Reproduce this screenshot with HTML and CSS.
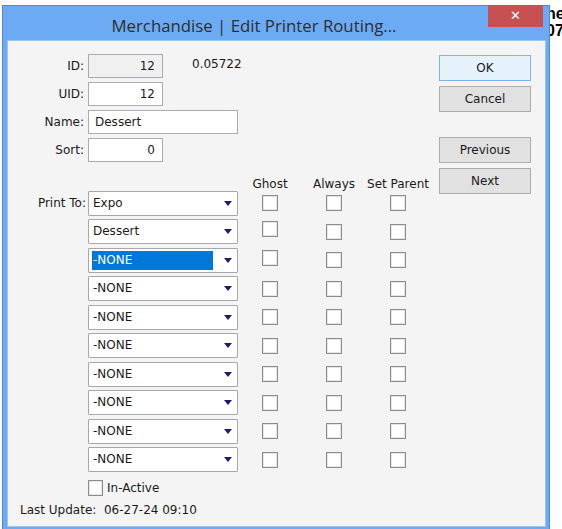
FILE: index.html
```html
<!DOCTYPE html>
<html>
<head>
<meta charset="utf-8">
<link rel="stylesheet" href="styles.css">
</head>
<body>
<div class="desk-text">ne<br>07</div>
<div class="window">
  <div class="titlebar">
    <div class="title">Merchandise | Edit Printer Routing...</div>
    <div class="close">&#x2715;</div>
  </div>
  <div class="client">
    <div class="main">
      <div class="form">
        <div class="lbl">ID:</div>
        <div class="input short num disabled">12</div>
        <div class="extra">0.05722</div>
        <div class="lbl">UID:</div>
        <div class="input short num">12</div>
        <div></div>
        <div class="lbl">Name:</div>
        <div class="input long">Dessert</div>
        <div class="lbl">Sort:</div>
        <div class="input short num">0</div>
        <div></div>
      </div>
      <div class="routes">
        <div></div><div></div>
        <div class="hdr">Ghost</div><div class="hdr">Always</div><div class="hdr">Set Parent</div>

        <div class="lbl">Print To:</div>
        <div class="combo"><span class="val">Expo</span><span class="arrow"></span></div>
        <div class="cb"></div><div class="cb"></div><div class="cb"></div>

        <div></div>
        <div class="combo"><span class="val">Dessert</span><span class="arrow"></span></div>
        <div class="cb up"></div><div class="cb"></div><div class="cb"></div>

        <div></div>
        <div class="combo"><span class="val sel">-NONE</span><span class="arrow"></span></div>
        <div class="cb up"></div><div class="cb"></div><div class="cb"></div>

        <div></div>
        <div class="combo"><span class="val">-NONE</span><span class="arrow"></span></div>
        <div class="cb"></div><div class="cb"></div><div class="cb"></div>

        <div></div>
        <div class="combo"><span class="val">-NONE</span><span class="arrow"></span></div>
        <div class="cb"></div><div class="cb"></div><div class="cb"></div>

        <div></div>
        <div class="combo"><span class="val">-NONE</span><span class="arrow"></span></div>
        <div class="cb"></div><div class="cb"></div><div class="cb"></div>

        <div></div>
        <div class="combo"><span class="val">-NONE</span><span class="arrow"></span></div>
        <div class="cb"></div><div class="cb"></div><div class="cb"></div>

        <div></div>
        <div class="combo"><span class="val">-NONE</span><span class="arrow"></span></div>
        <div class="cb"></div><div class="cb"></div><div class="cb"></div>

        <div></div>
        <div class="combo"><span class="val">-NONE</span><span class="arrow"></span></div>
        <div class="cb"></div><div class="cb"></div><div class="cb"></div>

        <div></div>
        <div class="combo"><span class="val">-NONE</span><span class="arrow"></span></div>
        <div class="cb"></div><div class="cb"></div><div class="cb"></div>
      </div>
      <div class="inactive"><span class="cb small"></span><span>In-Active</span></div>
      <div class="updated">Last Update:&nbsp; 06-27-24 09:10</div>
    </div>
    <div class="buttons">
      <div class="btn default">OK</div>
      <div class="btn">Cancel</div>
      <div class="btn gap">Previous</div>
      <div class="btn">Next</div>
    </div>
  </div>
</div>
</body>
</html>
```

FILE: styles.css
```css
html, body {
  margin: 0;
  padding: 0;
  background: #ffffff;
  overflow: hidden;
  height: 529px;
}
body {
  position: relative;
  font-family: "DejaVu Sans", sans-serif;
  font-size: 12px;
  color: #1a1a1a;
}
.desk-text {
  position: absolute;
  left: 546px;
  top: 5px;
  font-family: "Liberation Sans", sans-serif;
  font-weight: bold;
  font-size: 16px;
  line-height: 17px;
  color: #000;
}
.window {
  position: relative;
  margin: 5px 0 0 2px;
  width: 548px;
  box-sizing: border-box;
  border: 1px solid #4d8ad6;
  background: #6caaf3;
  padding: 0 3px 3px 4px;
}
.titlebar {
  position: relative;
  height: 34px;
}
.title {
  padding: 10px 45px 0 0;
  text-align: center;
  font-family: "Open Sans", sans-serif;
  font-size: 16.8px;
  line-height: 20px;
  color: #2e2e2e;
}
.close {
  position: absolute;
  right: 3px;
  top: -1px;
  width: 55px;
  height: 22px;
  background: #c75050;
  color: #ffffff;
  font-family: "DejaVu Sans", sans-serif;
  font-size: 13px;
  font-weight: bold;
  line-height: 22px;
  text-align: center;
}
.client {
  display: flex;
  background: #f4f4f4;
  height: 487px;
  border: 1px solid #9cc4f2;
  box-sizing: border-box;
}
.main {
  display: flex;
  flex-direction: column;
}
.form {
  margin-top: 13px;
  display: grid;
  grid-template-columns: 80px 75px auto;
  grid-auto-rows: 24px;
  row-gap: 4px;
}
.lbl {
  text-align: right;
  padding-right: 4px;
  align-self: center;
  line-height: 14px;
}
.input {
  box-sizing: border-box;
  height: 24px;
  border: 1px solid #a9abb0;
  background: #ffffff;
  line-height: 22px;
  padding: 0 6px;
}
.input.short { width: 75px; }
.input.long { width: 150px; grid-column: span 2; }
.input.num { text-align: right; padding-right: 7px; }
.input.disabled { background: #f0f0f0; }
.extra {
  align-self: center;
  padding-left: 29px;
  line-height: 14px;
  margin-top: -4px;
}
.routes {
  margin-top: 11px;
  display: grid;
  grid-template-columns: 80px 150px 64px 64px 64px;
  grid-template-rows: 14px;
  grid-auto-rows: 25px;
  row-gap: 3.5px;
}
.hdr {
  text-align: center;
  line-height: 14px;
  align-self: end;
  margin-bottom: -4px;
}
.routes .lbl { padding-right: 2px; }
.combo {
  box-sizing: border-box;
  height: 25px;
  border: 1px solid #a8a8a8;
  border-radius: 1px;
  background: #ffffff;
  display: flex;
  align-items: center;
  padding-left: 3px;
}
.val {
  line-height: 19px;
  padding-left: 1px;
}
.val.sel {
  background: #0078d7;
  color: #ffffff;
  width: 120px;
  margin-top: 1px;
}
.arrow {
  margin-left: auto;
  margin-right: 5px;
  width: 0;
  height: 0;
  border-left: 4.5px solid transparent;
  border-right: 4.5px solid transparent;
  border-top: 5px solid #1c1c6a;
}
.cb {
  justify-self: center;
  align-self: center;
  box-sizing: border-box;
  width: 16px;
  height: 16px;
  border: 1px solid #8c8c8c;
  background: #ffffff;
  box-shadow: inset 0 0 0 1px #e6e6e6;
}
.cb.up { margin-top: -5px; }
.inactive {
  margin-top: 8px;
  margin-left: 80px;
  display: flex;
  align-items: center;
  gap: 4px;
  line-height: 16px;
}
.cb.small {
  width: 15px;
  height: 16px;
  display: block;
}
.updated {
  margin-top: 7px;
  margin-left: 12px;
  line-height: 14px;
}
.buttons {
  margin-left: auto;
  margin-right: 14px;
  margin-top: 14px;
  width: 92px;
  display: flex;
  flex-direction: column;
  gap: 5px;
}
.btn {
  box-sizing: border-box;
  height: 26px;
  border: 1px solid #adadad;
  background: #e1e1e1;
  text-align: center;
  line-height: 24px;
}
.btn.default {
  background: #e5f1fb;
  border-color: #7eb4ea;
}
.btn.gap { margin-top: 20px; }
```
